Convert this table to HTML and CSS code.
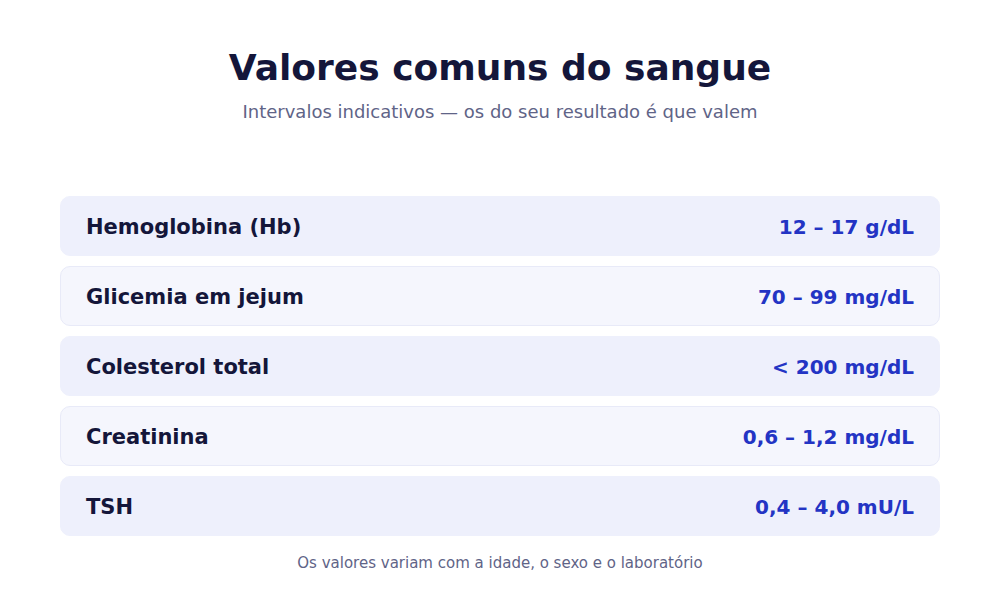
FILE: index.html
```html
<!DOCTYPE html>
<html lang="pt">
<head>
<meta charset="utf-8">
<title>Valores comuns do sangue</title>
<link rel="stylesheet" href="styles.css">
</head>
<body>
<main class="page">
  <header class="head">
    <h1 class="title">Valores comuns do sangue</h1>
    <p class="subtitle">Intervalos indicativos — os do seu resultado é que valem</p>
  </header>
  <ul class="list">
    <li class="row row-a"><span class="name">Hemoglobina (Hb)</span><span class="value">12 – 17 g/dL</span></li>
    <li class="row row-b"><span class="name">Glicemia em jejum</span><span class="value">70 – 99 mg/dL</span></li>
    <li class="row row-a"><span class="name">Colesterol total</span><span class="value">&lt; 200 mg/dL</span></li>
    <li class="row row-b"><span class="name">Creatinina</span><span class="value">0,6 – 1,2 mg/dL</span></li>
    <li class="row row-a"><span class="name">TSH</span><span class="value">0,4 – 4,0 mU/L</span></li>
  </ul>
  <p class="foot">Os valores variam com a idade, o sexo e o laboratório</p>
</main>
</body>
</html>
```
FILE: styles.css
```css
* { box-sizing: border-box; }
html, body { margin: 0; padding: 0; background: #ffffff; }
body { font-family: "DejaVu Sans", sans-serif; width: 1000px; height: 600px; overflow: hidden; }
.page { display: flex; flex-direction: column; align-items: stretch; padding: 46px 60px 0; }
.head { display: flex; flex-direction: column; align-items: center; }
.title { margin: 0; font-size: 36px; line-height: 44px; font-weight: bold; color: #14163a; }
.subtitle { margin: 10px 0 0; font-size: 18px; line-height: 24px; color: #5f6487; }
.list { list-style: none; margin: 72px 0 0; padding: 0; display: flex; flex-direction: column; gap: 10px; }
.row { display: flex; justify-content: space-between; align-items: center; height: 60px; padding: 2px 25px 0; border-radius: 10px; border: 1px solid #e8eaf8; }
.row-a { background: #eef0fc; border-color: #eef0fc; }
.row-b { background: #f5f6fd; }
.name { font-size: 21px; font-weight: bold; color: #14163a; }
.value { font-size: 20px; font-weight: bold; color: #2334c4; }
.foot { margin: 18px 0 0; text-align: center; font-size: 15px; line-height: 18px; color: #5f6487; }
```
